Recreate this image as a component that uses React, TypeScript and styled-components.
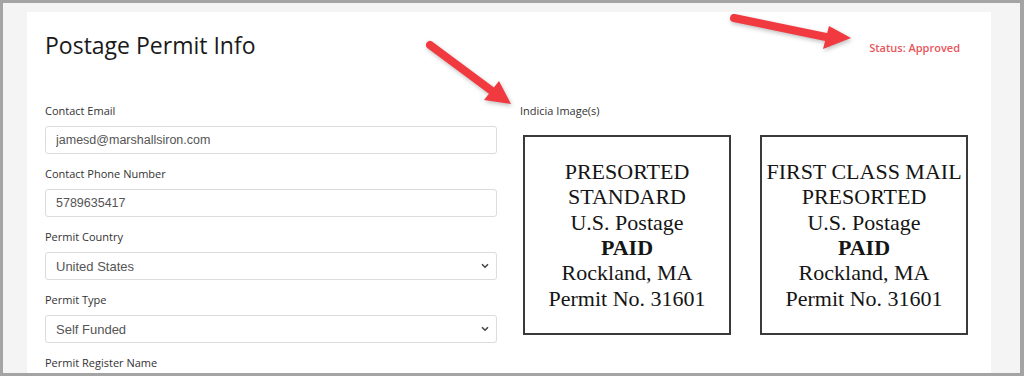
import React from 'react';
import styled, { createGlobalStyle } from 'styled-components';

const GlobalStyle = createGlobalStyle`
  html, body {
    margin: 0;
    padding: 0;
    background: #ffffff;
  }
  * {
    box-sizing: border-box;
  }
`;

const Frame = styled.div`
  position: relative;
  width: 1024px;
  height: 376px;
  overflow: hidden;
  border: 3px solid #a4a4a4;
  border-right-width: 4px;
  background: #f4f4f4;
  padding: 9px 0 0 24px;
  font-family: 'Open Sans', 'Noto Sans', sans-serif;
`;

const Card = styled.div`
  width: 964px;
  height: 400px;
  background: #ffffff;
  padding: 19px 23px 0 18px;
`;

const Header = styled.div`
  display: flex;
  justify-content: space-between;
  align-items: flex-start;
  height: 71px;
`;

const Title = styled.h1`
  margin: 0;
  font-size: 23px;
  line-height: 28px;
  font-weight: 400;
  color: #1a1a1a;
`;

const Status = styled.div`
  margin: 10px 8px 0 0;
  font-size: 11px;
  line-height: 14px;
  font-weight: 600;
  color: #e8555a;
`;

const Body = styled.div`
  display: grid;
  grid-template-columns: 452px 1fr;
  column-gap: 23px;
`;

const Column = styled.div`
  display: flex;
  flex-direction: column;
`;

const Group = styled.div`
  display: flex;
  flex-direction: column;
  margin-bottom: 11px;
`;

const Label = styled.label`
  font-size: 11px;
  line-height: 18px;
  color: #333;
  margin-bottom: 6px;
`;

const TextInput = styled.input`
  height: 28px;
  width: 100%;
  border: 1px solid #dcdcdc;
  border-radius: 3px;
  padding: 0 10px;
  font-family: 'Liberation Sans', Arial, sans-serif;
  font-size: 12.5px;
  color: #555;
  background: #fff;
  outline: none;
`;

const SelectWrap = styled.div`
  position: relative;
  height: 28px;
`;

const Select = styled.select`
  appearance: none;
  -webkit-appearance: none;
  height: 28px;
  width: 100%;
  border: 1px solid #dcdcdc;
  border-radius: 3px;
  padding: 0 10px;
  font-family: 'Liberation Sans', Arial, sans-serif;
  font-size: 13px;
  color: #555;
  background: #fff;
  outline: none;
`;

const Chevron = styled.svg`
  position: absolute;
  right: 8px;
  top: 11px;
  pointer-events: none;
`;

const Stamps = styled.div`
  display: flex;
  gap: 29px;
  padding-left: 3px;
  margin-top: 9px;
`;

const Stamp = styled.div`
  width: 208px;
  height: 200px;
  border: 2px solid #3a3a3a;
  display: flex;
  flex-direction: column;
  align-items: center;
  justify-content: center;
  font-family: 'Liberation Serif', 'Times New Roman', serif;
  font-size: 22px;
  line-height: 25.4px;
  color: #151515;
  text-align: center;
`;

const Paid = styled.span`
  font-weight: 700;
`;

const Arrows = styled.svg`
  position: absolute;
  left: -3px;
  top: -3px;
  pointer-events: none;
  filter: drop-shadow(1px 2px 2px rgba(0, 0, 0, 0.25));
`;

function SelectField(props: { label: string; value: string }) {
  const { label, value } = props;
  return (
    <Group>
      <Label>{label}</Label>
      <SelectWrap>
        <Select defaultValue={value}>
          <option>{value}</option>
        </Select>
        <Chevron width="8" height="6" viewBox="0 0 8 6">
          <path d="M1 1.2 L4 4.2 L7 1.2" fill="none" stroke="#444" strokeWidth="1.6" />
        </Chevron>
      </SelectWrap>
    </Group>
  );
}

function InputField(props: { label: string; value: string }) {
  const { label, value } = props;
  return (
    <Group>
      <Label>{label}</Label>
      <TextInput defaultValue={value} />
    </Group>
  );
}

const stampLines = [
  ['PRESORTED', 'STANDARD'],
  ['FIRST CLASS MAIL', 'PRESORTED'],
];

export default function App() {
  return (
    <>
      <GlobalStyle />
      <Frame>
        <Card>
          <Header>
            <Title>Postage Permit Info</Title>
            <Status>Status: Approved</Status>
          </Header>
          <Body>
            <Column>
              <InputField label="Contact Email" value="jamesd@marshallsiron.com" />
              <InputField label="Contact Phone Number" value="5789635417" />
              <SelectField label="Permit Country" value="United States" />
              <SelectField label="Permit Type" value="Self Funded" />
              <Group>
                <Label>Permit Register Name</Label>
                <TextInput defaultValue="" />
              </Group>
            </Column>
            <Column>
              <Group>
                <Label>Indicia Image(s)</Label>
                <Stamps>
                  {stampLines.map((top) => (
                    <Stamp key={top[0]}>
                      <div>{top[0]}</div>
                      <div>{top[1]}</div>
                      <div>U.S. Postage</div>
                      <Paid>PAID</Paid>
                      <div>Rockland, MA</div>
                      <div>Permit No. 31601</div>
                    </Stamp>
                  ))}
                </Stamps>
              </Group>
            </Column>
          </Body>
        </Card>
        <Arrows width="1024" height="376" viewBox="0 0 1024 376">
          <line x1="430" y1="45" x2="492" y2="91" stroke="#f03a40" strokeWidth="8" strokeLinecap="round" />
          <polygon points="484,100 499,81 511,104" fill="#f03a40" />
          <line x1="734" y1="18" x2="826" y2="37" stroke="#f03a40" strokeWidth="8" strokeLinecap="round" />
          <polygon points="829,26 823,49 851,38" fill="#f03a40" />
        </Arrows>
      </Frame>
    </>
  );
}
